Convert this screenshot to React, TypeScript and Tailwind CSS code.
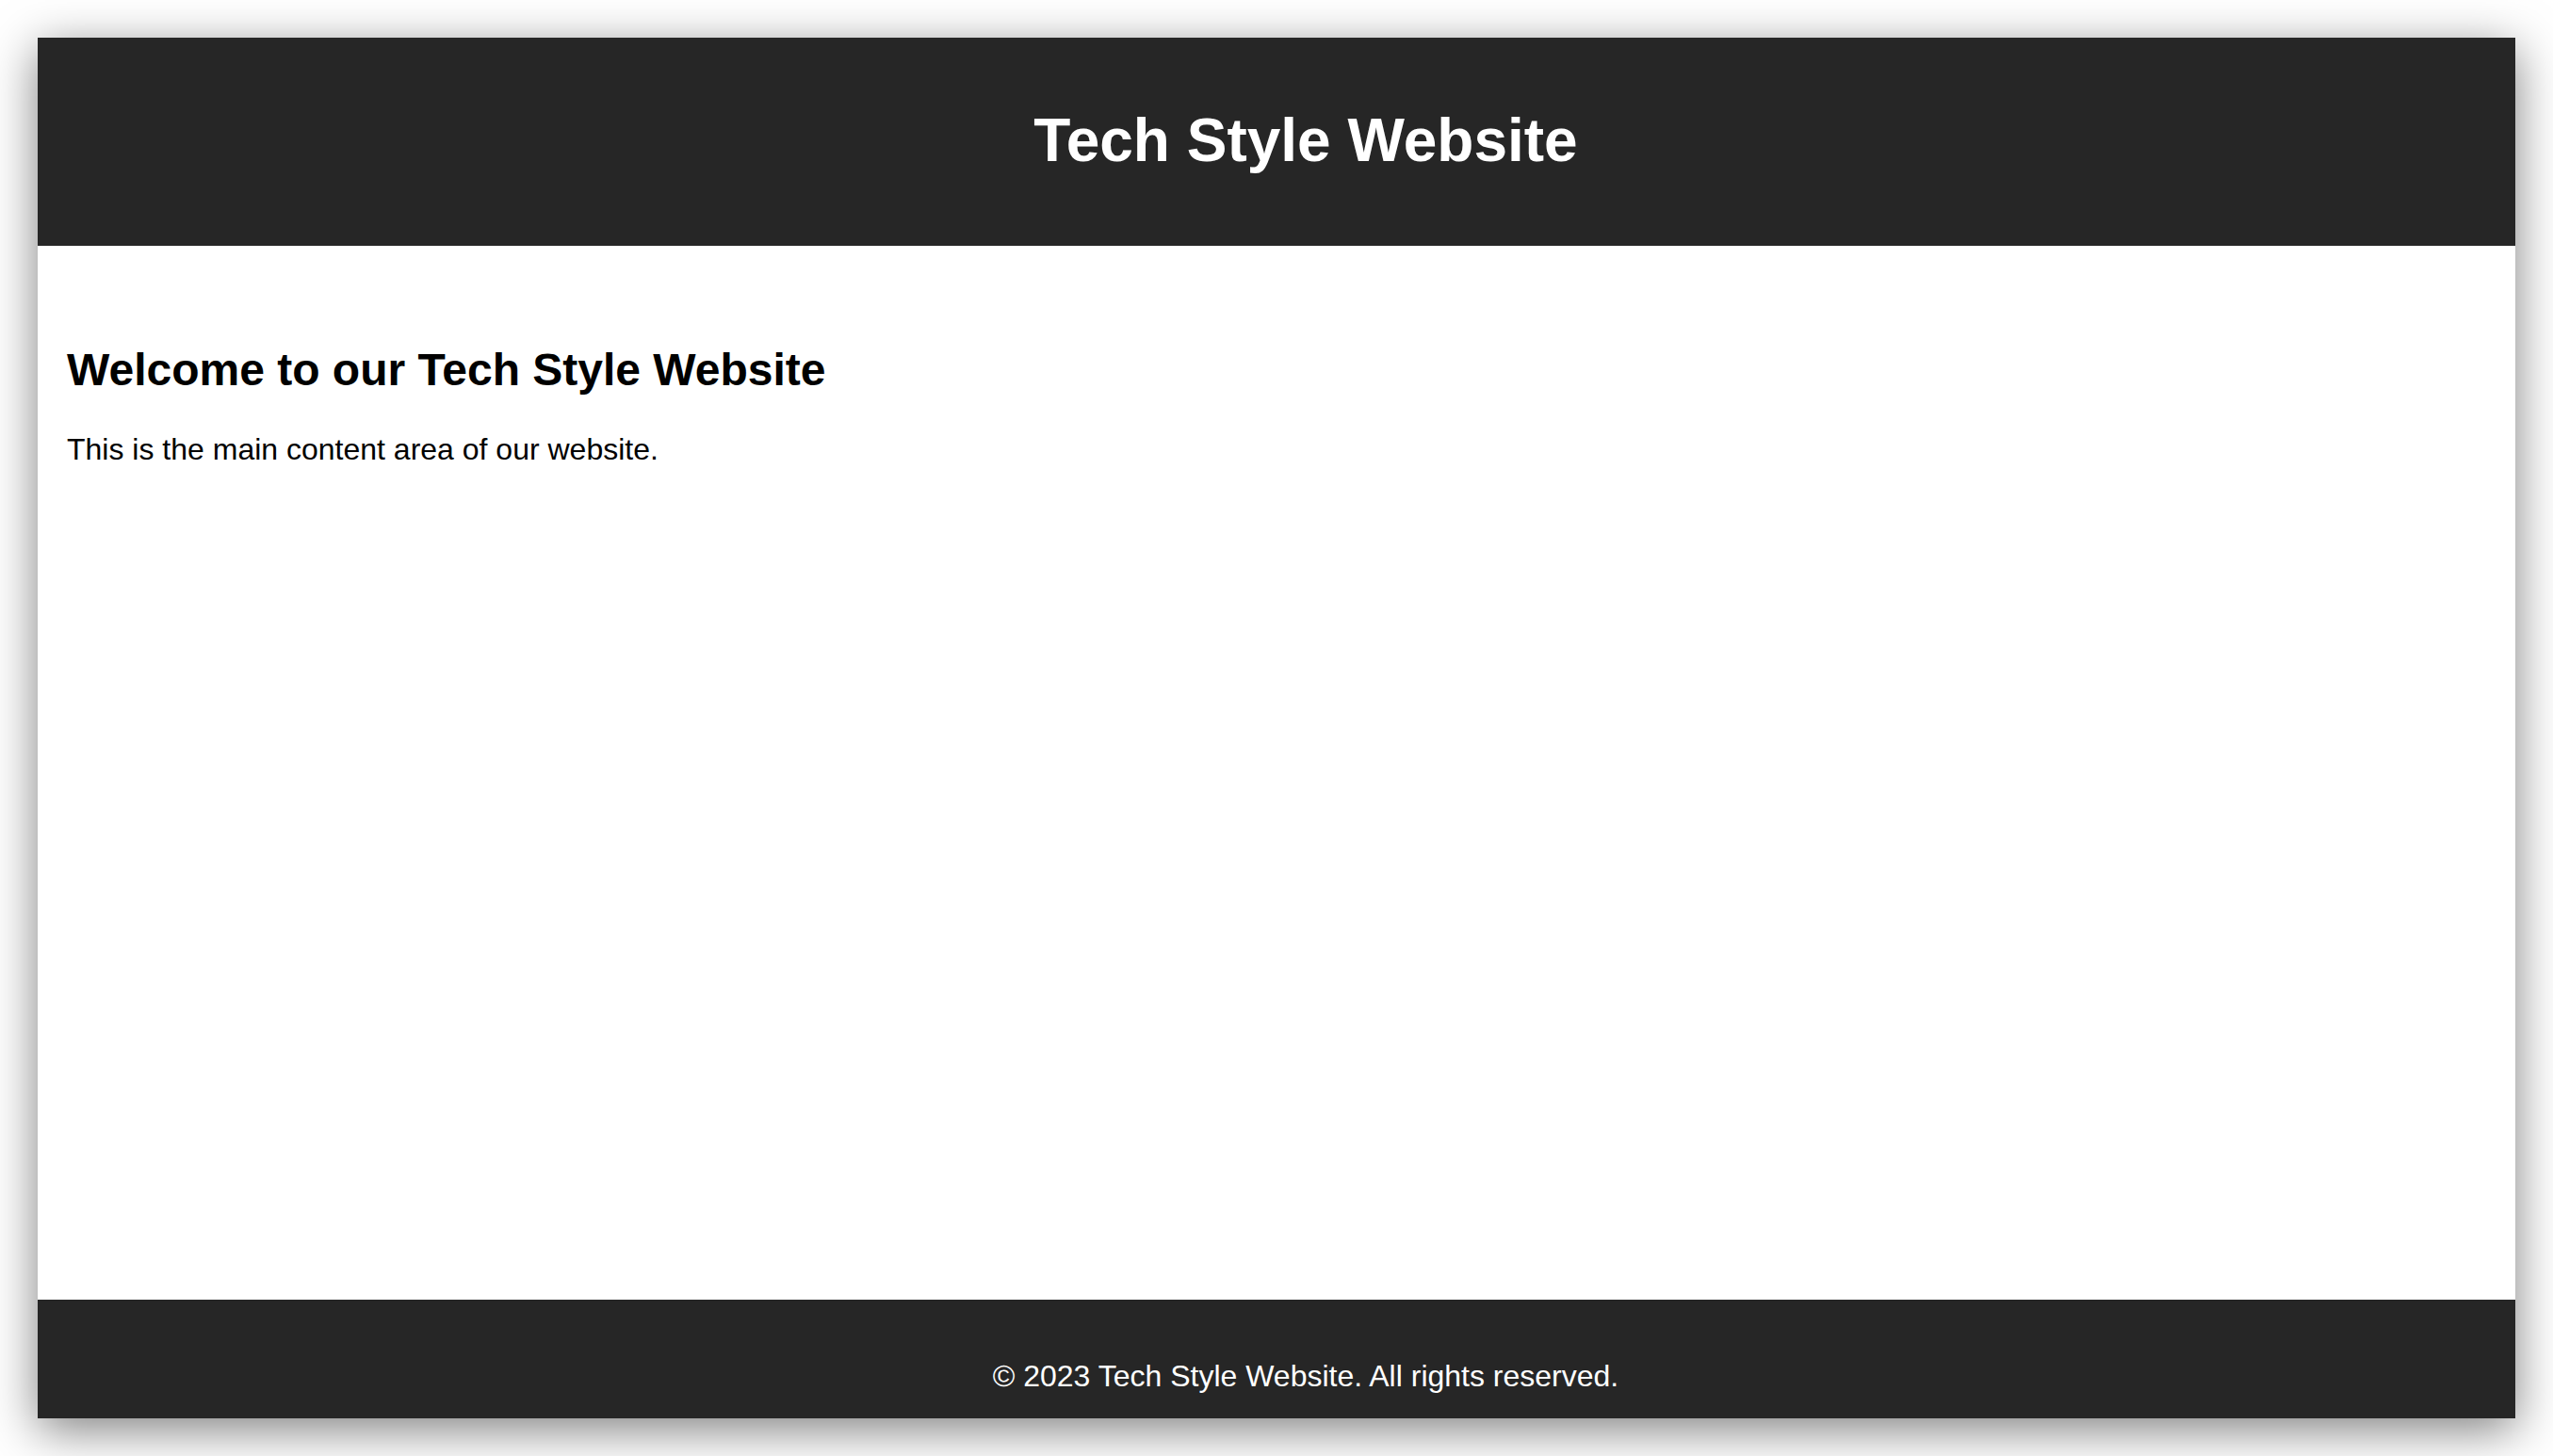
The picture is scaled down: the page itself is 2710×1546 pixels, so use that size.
export default function App() {
  return (
    <div className="w-[2710px] h-[1546px] bg-white p-[40px] font-['Liberation_Sans',Arial,sans-serif]">
      <div className="h-full flex flex-col bg-white shadow-[0_12px_48px_rgba(0,0,0,0.5)]">
        <header className="h-[221px] bg-[#262626] pl-[62px] pb-[3px] flex items-center justify-center">
          <h1 className="text-[64px] leading-[74px] font-bold text-white">Tech Style Website</h1>
        </header>
        <main className="flex-1 px-[31px] pt-[104px]">
          <h2 className="text-[48px] leading-[55px] font-bold text-black">Welcome to our Tech Style Website</h2>
          <p className="mt-[39px] text-[32px] leading-[37px] text-black">This is the main content area of our website.</p>
        </main>
        <footer className="h-[126px] bg-[#262626] pl-[62px] pt-[63px] text-center">
          <p className="text-[32px] leading-[37px] text-white">© 2023 Tech Style Website. All rights reserved.</p>
        </footer>
      </div>
    </div>
  );
}
